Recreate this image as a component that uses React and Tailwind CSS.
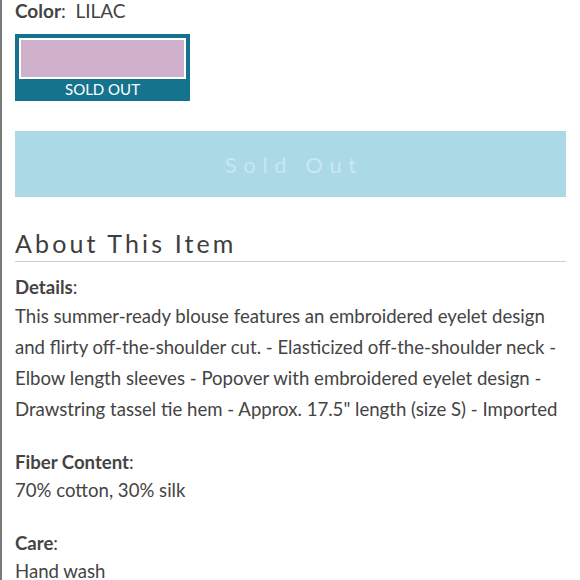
export default function App() {
  const lines = [
    "This summer-ready blouse features an embroidered eyelet design",
    "and flirty off-the-shoulder cut. - Elasticized off-the-shoulder neck -",
    "Elbow length sleeves - Popover with embroidered eyelet design -",
    'Drawstring tassel tie hem - Approx. 17.5" length (size S) - Imported',
  ];
  return (
    <div className="w-[580px] h-[580px] overflow-hidden bg-white border-l-2 border-[#7a7a7a] relative">
      <div className="pl-[13px] pr-[14px] text-[#444] font-['Lato',sans-serif] -mt-[3px]">
        <div className="text-[19px] leading-[28px]">
          <span className="font-bold">Color</span>:&nbsp; LILAC
        </div>
        <div className="mt-[9px] w-[175px] h-[67px] bg-[#16738e] p-[4px] flex flex-col">
          <div className="h-[41px] border-2 border-white bg-[#cfb0cb]" />
          <div className="flex-1 flex items-center justify-center text-white text-[15px] leading-none pt-[2px]">
            SOLD OUT
          </div>
        </div>
        <div className="mt-[30px] h-[66px] bg-[#abd9e5] flex items-center justify-center">
          <span className="text-[#c8e8f0] text-[22px] tracking-[0.3em] pl-[0.3em]">Sold Out</span>
        </div>
        <div className="mt-[31px] text-[25px] tracking-[0.125em] leading-[30px] pb-[3px] border-b border-[#d0d0d0] text-[#3e3e3e]">
          About This Item
        </div>
        <div className="mt-[12px] text-[18.6px]">
          <div className="leading-[27px]"><span className="font-bold">Details</span>:</div>
          <p className="leading-[31px]">
            {lines.map((l) => (
              <span key={l} className="block whitespace-nowrap">{l}</span>
            ))}
          </p>
          <div className="mt-[23px] leading-[28px]"><span className="font-bold">Fiber Content</span>:</div>
          <p className="leading-[28px]">70% cotton, 30% silk</p>
          <div className="mt-[25px] leading-[28px]"><span className="font-bold">Care</span>:</div>
          <p className="leading-[28px]">Hand wash</p>
        </div>
      </div>
    </div>
  );
}
